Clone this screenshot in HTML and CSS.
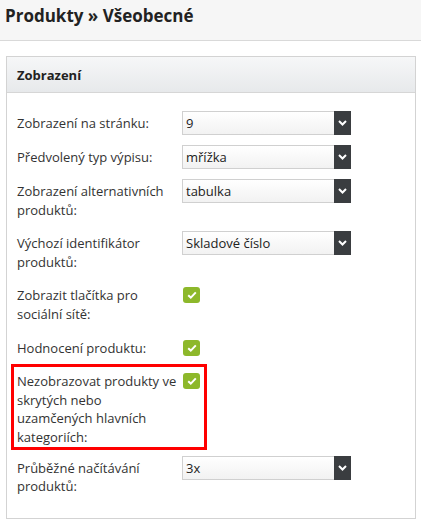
FILE: index.html
```html
<!DOCTYPE html>
<html lang="cs">
<head>
<meta charset="utf-8">
<title>Produkty » Všeobecné</title>
<link rel="stylesheet" href="styles.css">
</head>
<body>
<header class="page-head">
  <h1 class="page-title">Produkty » Všeobecné</h1>
</header>
<section class="panel">
  <div class="panel-head">Zobrazení</div>
  <div class="panel-body">
    <div class="row">
      <label class="lbl">Zobrazení na stránku:</label>
      <div class="select"><span class="val">9</span><span class="btn"><svg width="9" height="6" viewBox="0 0 9 6"><path d="M1 1l3.5 3.5L8 1" fill="none" stroke="#fff" stroke-width="2"/></svg></span></div>
    </div>
    <div class="row">
      <label class="lbl">Předvolený typ výpisu:</label>
      <div class="select"><span class="val">mřížka</span><span class="btn"><svg width="9" height="6" viewBox="0 0 9 6"><path d="M1 1l3.5 3.5L8 1" fill="none" stroke="#fff" stroke-width="2"/></svg></span></div>
    </div>
    <div class="row">
      <label class="lbl">Zobrazení alternativních produktů:</label>
      <div class="select"><span class="val">tabulka</span><span class="btn"><svg width="9" height="6" viewBox="0 0 9 6"><path d="M1 1l3.5 3.5L8 1" fill="none" stroke="#fff" stroke-width="2"/></svg></span></div>
    </div>
    <div class="row">
      <label class="lbl">Výchozí identifikátor produktů:</label>
      <div class="select"><span class="val">Skladové číslo</span><span class="btn"><svg width="9" height="6" viewBox="0 0 9 6"><path d="M1 1l3.5 3.5L8 1" fill="none" stroke="#fff" stroke-width="2"/></svg></span></div>
    </div>
    <div class="row">
      <label class="lbl">Zobrazit tlačítka pro sociální sítě:</label>
      <span class="check"><svg width="10" height="8" viewBox="0 0 10 8"><path d="M1.2 4.2l2.6 2.4L8.8 1.4" fill="none" stroke="#fff" stroke-width="2"/></svg></span>
    </div>
    <div class="row">
      <label class="lbl">Hodnocení produktu:</label>
      <span class="check"><svg width="10" height="8" viewBox="0 0 10 8"><path d="M1.2 4.2l2.6 2.4L8.8 1.4" fill="none" stroke="#fff" stroke-width="2"/></svg></span>
    </div>
    <div class="highlight">
      <div class="row row-hl">
        <label class="lbl">Nezobrazovat produkty ve skrytých nebo uzamčených hlavních kategoriích:</label>
        <span class="check"><svg width="10" height="8" viewBox="0 0 10 8"><path d="M1.2 4.2l2.6 2.4L8.8 1.4" fill="none" stroke="#fff" stroke-width="2"/></svg></span>
      </div>
    </div>
    <div class="row">
      <label class="lbl">Průběžné načítávání produktů:</label>
      <div class="select"><span class="val">3x</span><span class="btn"><svg width="9" height="6" viewBox="0 0 9 6"><path d="M1 1l3.5 3.5L8 1" fill="none" stroke="#fff" stroke-width="2"/></svg></span></div>
    </div>
  </div>
</section>
</body>
</html>
```
FILE: styles.css
```css
html, body {
  margin: 0;
  padding: 0;
  background: #fff;
  font-family: "Open Sans", "DejaVu Sans", sans-serif;
  color: #333;
}
.page-head {
  height: 40px;
  background: #f6f6f6;
  border-bottom: 1px solid #d9d9d9;
  display: flex;
  align-items: center;
  padding-left: 5px;
}
.page-title {
  margin: 0;
  font-size: 17px;
  font-weight: 700;
  color: #222;
  line-height: 20px;
  position: relative;
  top: -4px;
}
.panel {
  margin: 15px 5px 0 6px;
  border: 1px solid #d3d3d3;
}
.panel-head {
  height: 36px;
  box-sizing: border-box;
  padding-left: 10px;
  display: flex;
  align-items: center;
  font-size: 13px;
  font-weight: 700;
  color: #222;
  background: linear-gradient(#f6f7f8, #e7e9eb);
  border-bottom: 1px solid #d6d6d6;
}
.panel-body {
  padding: 18px 10px 10px 10px;
}
.row {
  display: flex;
  align-items: flex-start;
  gap: 5px;
  margin-bottom: 10px;
}
.lbl {
  width: 160px;
  flex: none;
  font-size: 13px;
  line-height: 18.6px;
  padding: 3px 0 2px 0;
  color: #333;
}
.select {
  width: 169px;
  height: 24px;
  box-sizing: border-box;
  border: 1px solid #d0d0d0;
  border-right: none;
  background: linear-gradient(#ffffff, #f2f2f2);
  display: flex;
  align-items: center;
  font-size: 13px;
  color: #222;
}
.val {
  flex: 1;
  padding-left: 3px;
}
.btn {
  width: 17px;
  height: 24px;
  margin-top: -1px;
  margin-bottom: -1px;
  background: #3a3d40;
  display: flex;
  align-items: center;
  justify-content: center;
}
.check {
  margin-top: 4px;
  margin-left: 1px;
  width: 17px;
  height: 16px;
  border-radius: 3px;
  background: #8db82b;
  display: flex;
  align-items: center;
  justify-content: center;
}
.highlight {
  border: 3px solid #f00;
  margin: -5px 0 6px -6px;
  width: 184px;
  padding: 2px 3px 0 3px;
}
.row-hl {
  margin-bottom: 0;
}
.row-hl .lbl {
  padding-bottom: 0;
}
```
